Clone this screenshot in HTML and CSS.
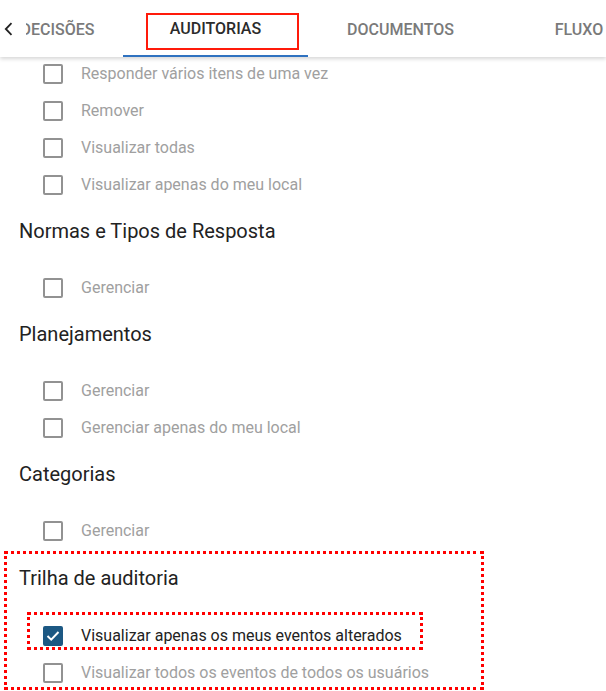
FILE: index.html
```html
<!DOCTYPE html>
<html lang="pt-BR">
<head>
<meta charset="utf-8">
<title>Permissões - Auditorias</title>
<link rel="stylesheet" href="styles.css">
</head>
<body>
<header class="tabbar">
  <button class="tab-prev" aria-label="Anterior">
    <svg width="10" height="14" viewBox="0 0 10 14"><polyline points="7.5,1.2 1.8,7 7.5,12.8" fill="none" stroke="#222" stroke-width="1.8"/></svg>
  </button>
  <div class="tab-viewport">
    <div class="tab-strip">
      <div class="tab tab-decisoes">DECISÕES</div>
      <div class="tab tab-active"><span class="tab-label">AUDITORIAS</span></div>
      <div class="tab">DOCUMENTOS</div>
      <div class="tab tab-fluxo">FLUXO</div>
    </div>
  </div>
</header>

<main class="content">
  <ul class="perm-list">
    <li class="perm"><span class="box"></span><span class="perm-text">Responder vários itens de uma vez</span></li>
    <li class="perm"><span class="box"></span><span class="perm-text">Remover</span></li>
    <li class="perm"><span class="box"></span><span class="perm-text">Visualizar todas</span></li>
    <li class="perm"><span class="box"></span><span class="perm-text">Visualizar apenas do meu local</span></li>
  </ul>

  <h2 class="group-title">Normas e Tipos de Resposta</h2>
  <ul class="perm-list">
    <li class="perm"><span class="box"></span><span class="perm-text">Gerenciar</span></li>
  </ul>

  <h2 class="group-title">Planejamentos</h2>
  <ul class="perm-list">
    <li class="perm"><span class="box"></span><span class="perm-text">Gerenciar</span></li>
    <li class="perm"><span class="box"></span><span class="perm-text">Gerenciar apenas do meu local</span></li>
  </ul>

  <h2 class="group-title">Categorias</h2>
  <ul class="perm-list">
    <li class="perm"><span class="box"></span><span class="perm-text">Gerenciar</span></li>
  </ul>

  <section class="highlight-group">
    <h2 class="group-title group-title-trail">Trilha de auditoria</h2>
    <ul class="perm-list">
      <li class="perm perm-checked perm-marked">
        <span class="box box-checked">
          <svg width="14" height="12" viewBox="0 0 14 12"><polyline points="1.5,6 5.2,9.6 12.5,2" fill="none" stroke="#fff" stroke-width="2"/></svg>
        </span>
        <span class="perm-text">Visualizar apenas os meus eventos alterados</span>
      </li>
      <li class="perm"><span class="box"></span><span class="perm-text">Visualizar todos os eventos de todos os usuários</span></li>
    </ul>
  </section>
</main>
</body>
</html>
```

FILE: styles.css
```css
*, *::before, *::after { box-sizing: border-box; }

html, body {
  margin: 0;
  padding: 0;
  background: #fff;
  font-family: Roboto, "Liberation Sans", Arial, sans-serif;
  overflow: hidden;
}

.tabbar {
  position: relative;
  z-index: 2;
  height: 57px;
  display: flex;
  background: #fff;
  box-shadow: 0 2px 4px rgba(0, 0, 0, 0.16);
}

.tab-prev {
  width: 26px;
  flex: none;
  border: 0;
  background: #fff;
  padding: 0 0 0 4px;
  display: flex;
  align-items: center;
  justify-content: flex-start;
  margin-top: 1px;
}

.tab-viewport {
  flex: 1;
  overflow: hidden;
}

.tab-strip {
  display: flex;
  height: 57px;
  margin-left: -34px;
}

.tab {
  flex: none;
  width: 185px;
  height: 57px;
  display: flex;
  align-items: center;
  justify-content: center;
  font-size: 16px;
  font-weight: 500;
  color: #7a7a7a;
  padding-top: 2px;
}

.tab-decisoes { width: 131px; }
.tab-fluxo { width: 172px; }

.tab-active {
  position: relative;
  color: #2b2b2b;
  border-bottom: 2px solid #2f72c0;
}

.tab-active::after {
  content: "";
  position: absolute;
  left: 23px;
  top: 13px;
  width: 153px;
  height: 37px;
  border: 2px solid #ff1a0a;
}

.content {
  margin-top: -2px;
  position: relative;
  z-index: 1;
}

.perm-list {
  list-style: none;
  margin: 0;
  padding: 0;
}

.perm {
  height: 37px;
  display: flex;
  align-items: center;
  padding-left: 43px;
  gap: 18px;
  font-size: 16px;
  color: #a0a0a0;
}

.box {
  width: 20px;
  height: 20px;
  flex: none;
  border: 2px solid #929292;
  border-radius: 2px;
  display: flex;
  align-items: center;
  justify-content: center;
}

.box-checked {
  background: #1c5883;
  border-color: #1c5883;
}

.perm-checked { color: #222; }

.perm-marked { position: relative; }

.perm-marked::after {
  content: "";
  position: absolute;
  left: 27px;
  top: -5px;
  width: 396px;
  height: 38px;
  border: 3px dotted #ff0000;
  pointer-events: none;
}

.group-title {
  margin: 14px 0 24px 19px;
  font-size: 20px;
  line-height: 28px;
  font-weight: 400;
  color: #222;
}

.highlight-group {
  position: relative;
  margin-top: 2px;
  padding-top: 13px;
}

.group-title-trail {
  margin-top: 0;
  margin-bottom: 25px;
}

.highlight-group::before {
  content: "";
  position: absolute;
  left: 4px;
  top: 0;
  width: 480px;
  height: 139px;
  border: 3px dotted #ff0000;
  pointer-events: none;
}
```
